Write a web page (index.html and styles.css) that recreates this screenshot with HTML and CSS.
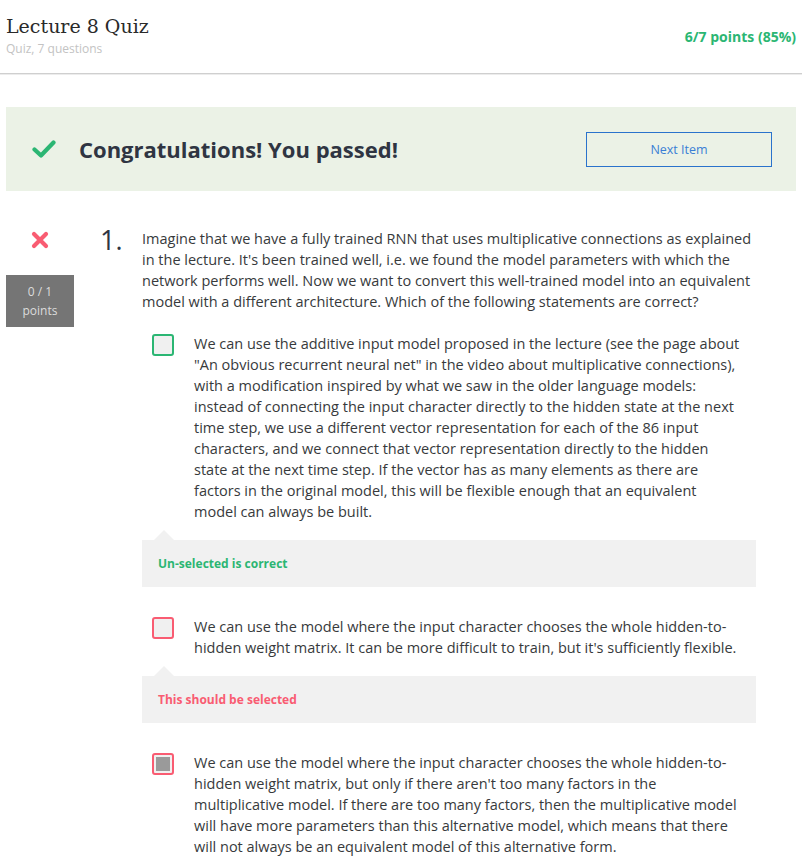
FILE: index.html
```html
<!DOCTYPE html>
<html lang="en">
<head>
<meta charset="utf-8">
<title>Lecture 8 Quiz</title>
<link rel="stylesheet" href="styles.css">
</head>
<body>
<header class="header">
  <div class="header-titles">
    <h1 class="title">Lecture 8 Quiz</h1>
    <div class="subtitle">Quiz, 7 questions</div>
  </div>
  <div class="score">6/7 points (85%)</div>
</header>

<section class="banner">
  <svg class="banner-check" width="24" height="18" viewBox="0 0 24 18" aria-hidden="true">
    <path d="M2.5 9.5 L9 15.5 L21.5 2.5" fill="none" stroke="#2bb673" stroke-width="4.2" stroke-linecap="round" stroke-linejoin="round"/>
  </svg>
  <div class="banner-text">Congratulations! You passed!</div>
  <button class="next-btn">Next Item</button>
</section>

<section class="question">
  <div class="q-side">
    <svg class="q-x" width="18" height="18" viewBox="0 0 18 18" aria-hidden="true">
      <path d="M3 3 L15 15 M15 3 L3 15" stroke="#f95c72" stroke-width="4.2" stroke-linecap="round"/>
    </svg>
    <div class="q-points">0 / 1<br>points</div>
  </div>
  <div class="q-num">1.</div>
  <div class="q-body">
    <p class="q-text">Imagine that we have a fully trained RNN that uses multiplicative connections as explained in the lecture. It's been trained well, i.e. we found the model parameters with which the network performs well. Now we want to convert this well-trained model into an equivalent model with a different architecture. Which of the following statements are correct?</p>

    <div class="option">
      <span class="box box-green"></span>
      <div class="opt-text">We can use the additive input model proposed in the lecture (see the page about "An obvious recurrent neural net" in the video about multiplicative connections), with a modification inspired by what we saw in the older language models: instead of connecting the input character directly to the hidden state at the next time step, we use a different vector representation for each of the 86 input characters, and we connect that vector representation directly to the hidden state at the next time step. If the vector has as many elements as there are factors in the original model, this will be flexible enough that an equivalent model can always be built.</div>
    </div>
    <div class="feedback feedback-ok">Un-selected is correct</div>

    <div class="option">
      <span class="box box-red"></span>
      <div class="opt-text">We can use the model where the input character chooses the whole hidden-to-hidden weight matrix. It can be more difficult to train, but it's sufficiently flexible.</div>
    </div>
    <div class="feedback feedback-bad">This should be selected</div>

    <div class="option">
      <span class="box box-red box-checked"></span>
      <div class="opt-text">We can use the model where the input character chooses the whole hidden-to-hidden weight matrix, but only if there aren't too many factors in the multiplicative model. If there are too many factors, then the multiplicative model will have more parameters than this alternative model, which means that there will not always be an equivalent model of this alternative form.</div>
    </div>
  </div>
</section>
</body>
</html>
```

FILE: styles.css
```css
* { box-sizing: border-box; }

body {
  margin: 0;
  background: #fff;
  font-family: "Open Sans", "Noto Sans", sans-serif;
  color: #373a3c;
}

.header {
  display: flex;
  align-items: center;
  justify-content: space-between;
  height: 74px;
  padding: 0 6px;
  border-bottom: 1px solid #cfcfcf;
  box-shadow: 0 1px 0 #ececec;
}

.header-titles {
  padding-bottom: 2px;
}

.title {
  margin: 0;
  font-family: "DejaVu Serif", serif;
  font-weight: normal;
  font-size: 19px;
  line-height: 26px;
  color: #2a2a2a;
}

.subtitle {
  font-size: 12px;
  line-height: 20px;
  color: #c3c3c3;
}

.score {
  font-size: 14px;
  font-weight: bold;
  color: #2bb673;
}

.banner {
  display: flex;
  align-items: center;
  height: 84px;
  margin: 33px 6px 0;
  padding: 0 24px 0 26px;
  background: #ebf2e6;
}

.banner-check {
  display: block;
  flex: none;
}

.banner-text {
  flex: 1;
  margin-left: 23px;
  font-size: 22px;
  font-weight: bold;
  color: #2f3542;
}

.next-btn {
  width: 186px;
  height: 35px;
  border: 1px solid #2a73cc;
  background: transparent;
  font-family: "Open Sans", sans-serif;
  font-size: 12.5px;
  color: #3a7fd5;
}

.question {
  display: flex;
  align-items: flex-start;
  margin-top: 37px;
  padding: 0 46px 0 6px;
}

.q-side {
  width: 68px;
  flex: none;
  display: flex;
  flex-direction: column;
  align-items: center;
}

.q-x {
  display: block;
  margin-top: 3px;
}

.q-points {
  width: 68px;
  height: 52px;
  margin-top: 26px;
  padding-top: 7px;
  background: #757575;
  color: #dcdcdc;
  font-size: 12px;
  line-height: 19px;
  text-align: center;
}

.q-num {
  width: 68px;
  flex: none;
  padding-left: 26px;
  font-size: 27px;
  font-weight: 400;
  line-height: 24px;
  color: #2f3542;
}

.q-body {
  flex: 1;
  min-width: 0;
}

.q-text {
  margin: 0;
  font-size: 14.5px;
  line-height: 21px;
}

.option {
  display: flex;
  align-items: flex-start;
  margin: 21px 0 0 10px;
}

.box {
  flex: none;
  width: 22px;
  height: 22px;
  margin-top: 1px;
  border: 2px solid;
  border-radius: 3px;
  background: #f0f0f0;
  position: relative;
}

.box-green { border-color: #2bb673; }
.box-red { border-color: #f95c72; }

.box-checked::after {
  content: "";
  position: absolute;
  left: 2px;
  top: 2px;
  width: 14px;
  height: 14px;
  background: #9a9a9a;
}

.opt-text {
  margin-left: 20px;
  padding-right: 14px;
  font-size: 14.5px;
  line-height: 21px;
}

.feedback {
  position: relative;
  height: 47px;
  margin-top: 18px;
  margin-bottom: 29px;
  padding: 0 16px;
  background: #f1f1f1;
  font-size: 12px;
  font-weight: bold;
  line-height: 47px;
}

.feedback::before {
  content: "";
  position: absolute;
  left: 12px;
  top: -10px;
  border-left: 10px solid transparent;
  border-right: 10px solid transparent;
  border-bottom: 10px solid #f1f1f1;
}

.feedback-ok { color: #2bb673; }
.feedback-bad { color: #f95c72; }
```
